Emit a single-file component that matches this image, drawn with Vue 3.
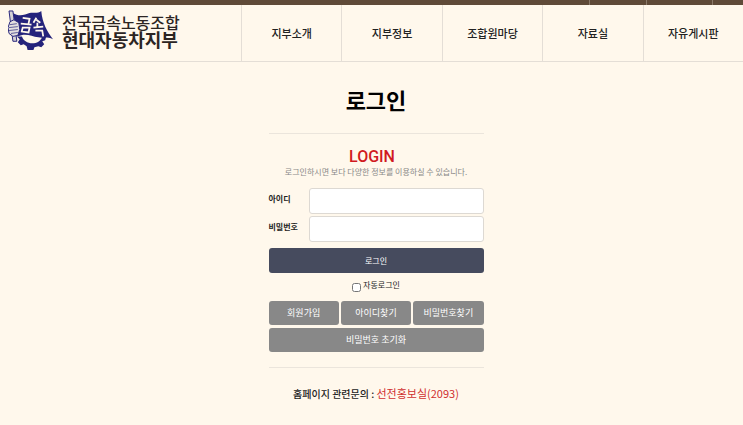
<script setup>
import { ref } from 'vue'

const menu = ['지부소개', '지부정보', '조합원마당', '자료실', '자유게시판']
const userId = ref('')
const password = ref('')
const autoLogin = ref(false)
</script>

<template>
  <div class="page">
    <div class="topbar"><span class="wide"></span><span class="wider"></span><span></span></div>
    <header class="header">
      <a class="brand" href="#">
        <svg class="mark" viewBox="0 0 48 44" aria-hidden="true">
          <path d="M9 27 L12 30 L10 33 L13 36 L16 35 L19 37 L20 41 L26 41 L27 38 L31 37 L34 38 L37 35 L35 32 L38 31 L39 27 Z" fill="#25237b" />
          <path d="M14 26 C16 36 32 37 35 27 Z" fill="#fff8ec" />
          <path d="M5 3 C11 7 17 5 22 3 C26 2 30 4 34 1 C35 13 40 22 46 30 C40 27 36 29 31 28 C24 27 18 23 10 27 Z" fill="#25237b" />
          <path d="M1 1 L5 1 L9 32 L5 32 Z" fill="#d5d2d4" stroke="#25237b" />
          <path d="M2 12 L6 10 L11 13 L12 20 L10 26 L5 27 L1 24 L0 18 Z" fill="#e3dfdf" stroke="#25237b" />
          <path d="M2 15 L9 14 M1 18 L10 17 M1 21 L10 20 M3 24 L10 23" fill="none" stroke="#25237b" stroke-width="0.7" />
          <g fill="none" stroke="#fff8ec" stroke-width="1.8">
            <path d="M15 8 L22 9 L21 14 M13 14 L24 15 M15 18 L22 18 L21 23 L14 22 Z" />
            <path d="M29 8 L26 13 M29 10 L33 13 M30 13 L30 18 M26 18 L36 17 M28 21 L35 21 L36 27" />
          </g>
        </svg>
        <span class="name"><span class="union">전국금속노동조합</span><strong>현대자동차지부</strong></span>
      </a>
      <nav class="nav">
        <a v-for="item in menu" :key="item" href="#">{{ item }}</a>
      </nav>
    </header>

    <main class="content">
      <h1>로그인</h1>
      <form class="login" @submit.prevent>
        <h2>LOGIN</h2>
        <p class="intro">로그인하시면 보다 다양한 정보를 이용하실 수 있습니다.</p>
        <div class="fields">
          <label for="user-id">아이디</label>
          <input id="user-id" v-model="userId" type="text" />
          <label for="password">비밀번호</label>
          <input id="password" v-model="password" type="password" />
        </div>
        <button class="submit" type="submit">로그인</button>
        <div class="auto">
          <input id="auto-login" v-model="autoLogin" type="checkbox" />
          <label for="auto-login">자동로그인</label>
        </div>
        <div class="links">
          <a href="#">회원가입</a>
          <a href="#">아이디찾기</a>
          <a href="#">비밀번호찾기</a>
          <a class="full" href="#">비밀번호 초기화</a>
        </div>
      </form>
      <p class="contact">홈페이지 관련문의 : <em>선전홍보실(2093)</em></p>
    </main>
  </div>
</template>

<style>
body {
  margin: 0;
  background: #fff8ec;
}
</style>

<style scoped>
.page {
  font-family: "Noto Sans CJK KR", sans-serif;
  color: #222;
}
.page * {
  box-sizing: border-box;
}
a {
  color: inherit;
  text-decoration: none;
}
.topbar {
  display: flex;
  justify-content: flex-end;
  height: 5px;
  background: #5f4a38;
}
.topbar span {
  width: 31px;
  border-left: 1px solid #8b7a6a;
}
.topbar .wide {
  width: 57px;
}
.topbar .wider {
  width: 66px;
}
.header {
  display: flex;
  height: 57px;
  border-bottom: 1px solid #e4ded6;
}
.brand {
  display: flex;
  flex: 0 0 241px;
  gap: 7px;
  padding: 5px 0 0 8px;
}
.mark {
  width: 47px;
  height: 43px;
}
.name {
  display: flex;
  flex-direction: column;
  padding-top: 4px;
  color: #2c2523;
  line-height: 18px;
  white-space: nowrap;
}
.union {
  font-size: 16px;
  font-weight: 500;
  line-height: 16px;
}
.name strong {
  font-size: 18px;
  font-weight: 700;
}
.nav {
  display: grid;
  flex: 1;
  grid-template-columns: repeat(5, 1fr);
}
.nav a {
  display: flex;
  align-items: center;
  justify-content: center;
  border-left: 1px solid #e4ded6;
  font-size: 11px;
  font-weight: 500;
}
.content {
  display: flex;
  flex-direction: column;
  align-items: center;
  padding: 21px 0 24px 9px;
}
h1 {
  margin: 0;
  color: #000;
  font-size: 22px;
  font-weight: 700;
  line-height: 32px;
}
.login {
  width: 215px;
  margin-top: 18px;
  padding: 15px 0;
  border-top: 1px solid #ebe5dc;
  border-bottom: 1px solid #ebe5dc;
}
h2 {
  margin: 0;
  padding-right: 8px;
  color: #d11a21;
  font-family: Roboto, sans-serif;
  font-size: 16px;
  font-weight: 500;
  line-height: 16px;
  text-align: center;
}
.intro {
  margin: 0;
  color: #888;
  font-size: 8px;
  line-height: 14px;
  text-align: center;
}
.fields {
  display: grid;
  grid-template-columns: 40px 1fr;
  row-gap: 2px;
  margin-top: 9px;
}
.fields label {
  padding-top: 4px;
  font-size: 8px;
  font-weight: 700;
  line-height: 14px;
}
.fields input {
  width: 100%;
  height: 26px;
  padding: 4px 8px;
  border: 1px solid #ddd9d3;
  border-radius: 3px;
  background: #fff;
  font: inherit;
  font-size: 11px;
}
.submit {
  display: block;
  width: 100%;
  height: 25px;
  margin-top: 6px;
  padding: 0;
  border: 0;
  border-radius: 3px;
  background: #464b5e;
  color: #fff;
  font: inherit;
  font-size: 8px;
}
.auto {
  display: flex;
  justify-content: center;
  gap: 2px;
  height: 28px;
  padding-top: 6px;
  font-size: 8px;
  line-height: 12px;
}
.auto input {
  width: 9px;
  height: 9px;
  margin: 4px 0 0;
}
.links {
  display: grid;
  grid-template-columns: repeat(3, 1fr);
  gap: 3px 2px;
}
.links a {
  height: 24px;
  border-radius: 3px;
  background: #888;
  color: #fff;
  font-size: 9px;
  line-height: 24px;
  text-align: center;
}
.links .full {
  grid-column: 1 / -1;
}
.contact {
  margin: 17px 0 0;
  font-size: 10px;
  font-weight: 500;
  line-height: 16px;
}
.contact em {
  color: #d02f2f;
  font-size: 11px;
  font-style: normal;
  font-weight: 400;
}
</style>
